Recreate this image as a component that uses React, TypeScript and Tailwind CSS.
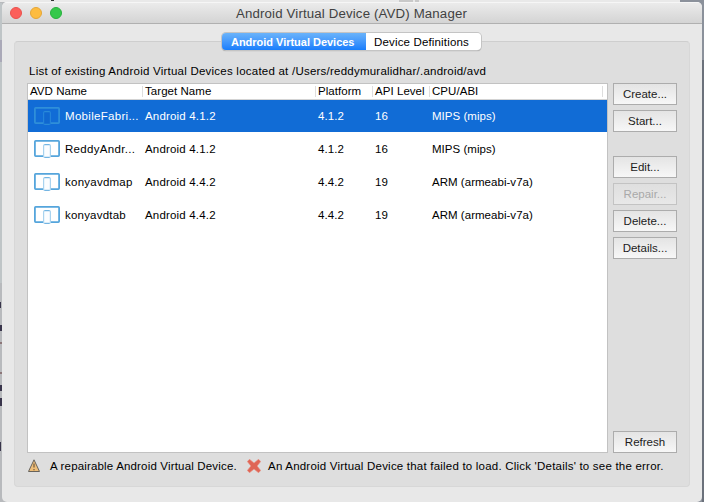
import type { ReactNode } from "react";

type Device = { name: string; nameTracking: string; target: string; platform: string; api: string; cpu: string };

const devices: Device[] = [
  { name: "MobileFabri...", nameTracking: "tracking-[0.3px]", target: "Android 4.1.2", platform: "4.1.2", api: "16", cpu: "MIPS (mips)" },
  { name: "ReddyAndr...", nameTracking: "tracking-[0.32px]", target: "Android 4.1.2", platform: "4.1.2", api: "16", cpu: "MIPS (mips)" },
  { name: "konyavdmap", nameTracking: "tracking-[0.24px]", target: "Android 4.4.2", platform: "4.4.2", api: "19", cpu: "ARM (armeabi-v7a)" },
  { name: "konyavdtab", nameTracking: "tracking-[0.2px]", target: "Android 4.4.2", platform: "4.4.2", api: "19", cpu: "ARM (armeabi-v7a)" },
];

const columns = "grid grid-cols-[115px_173px_57px_57px_173px_5px]";

function DeviceIcon({ selected }: { selected: boolean }) {
  const outer = selected ? "#2f8fd9" : "#55a5dc";
  const inner = selected ? "#2484da" : "#a9d3ef";
  const fill = selected ? "#1068d0" : "#fbfdff";
  return (
    <svg width="26" height="18" viewBox="0 0 26 18" className="block shrink-0">
      <rect x="0.9" y="0.9" width="24.2" height="15.2" rx="0.8" fill="none" stroke={outer} strokeWidth="1.8" />
      <rect x="9.6" y="4.6" width="6.8" height="12.8" rx="1.2" fill={fill} stroke={inner} strokeWidth="1.2" />
      <path d="M10.5 4.6h5M10.5 17.4h5" stroke={outer} strokeWidth="0.7" />
    </svg>
  );
}

function Button({ children, disabled = false }: { children: ReactNode; disabled?: boolean }) {
  return (
    <button
      disabled={disabled}
      className={
        "flex h-[22px] w-16 shrink-0 items-center justify-center border bg-linear-to-b text-[11.5px] " +
        (disabled
          ? "border-[#c3c3c3] from-[#dfdfdf] to-[#e8e8e8] text-[#a9a9a9]"
          : "border-[#acacac] from-[#e4e4e4] to-[#f7f7f7] text-[#1c1c1c]")
      }
    >
      {children}
    </button>
  );
}

function WarningIcon() {
  return (
    <svg width="12" height="14" viewBox="0 0 12 14" className="block">
      <path d="M6 0.8L11.5 12.5H0.5Z" fill="#edbd78" stroke="#67635c" strokeWidth="1" strokeLinejoin="round" />
      <path d="M6 4.5v4M6 10v1.3" stroke="#665037" strokeWidth="1.1" />
    </svg>
  );
}

function ErrorIcon() {
  return (
    <svg width="14" height="14" viewBox="0 0 14 14" className="block">
      <path d="M2.5 0.3L7 4.1L11.5 0.3L13.7 2.5L10.1 7L13.7 11.5L11.5 13.7L7 10L2.5 13.7L0.3 11.5L3.9 7L0.3 2.5Z" fill="#df6656" stroke="#eb8d80" strokeWidth="0.6" />
    </svg>
  );
}

function Backdrop() {
  return (
    <svg width="704" height="502" viewBox="0 0 704 502" className="absolute inset-0">
      <rect width="704" height="502" fill="#b8babd" />
      <rect width="681" height="2" fill="#e9e9e9" />
      <path d="M680 0h24v502h-24z" fill="#8b919b" />
      <path d="M702 60h2v442h-2z" fill="#6b717b" />
      <path d="M51 0h3v1h-3z" fill="#333" />
      <path d="M399 0h14v2h-14zM415 0h4v2h-4z" fill="#c9c9c9" />
      <path d="M0 3h2v280H0z" fill="#bfc5c7" />
      <path d="M0 40h2v22H0z" fill="#aaa9b8" />
      <path d="M0 302h1v6H0zM0 325h2v6H0zM0 385h2v6H0zM0 398h2v8H0zM0 442h1v9H0z" fill="#39354b" />
      <path d="M0 342h2v2H0zM0 372h2v2H0z" fill="#8d7678" />
    </svg>
  );
}

export default function App() {
  return (
    <div className="relative h-[502px] w-[704px] overflow-hidden font-['Liberation_Sans',Arial,sans-serif] text-[11.5px] leading-[16px] text-black">
      <Backdrop />
      <div className="relative ml-[2px] flex h-[502px] w-[700px] flex-col pt-[2px]">
        <div className="flex min-h-0 flex-1 flex-col overflow-hidden rounded-[5px] bg-[#e8e8e8]">
          <header className="flex h-[22px] shrink-0 items-center border-t border-b border-t-[#f6f6f6] border-b-[#b0b0b0] bg-linear-to-b from-[#ebebeb] to-[#d4d4d4] pl-2">
            <div className="flex w-[52px] shrink-0 gap-2">
              <i className="size-3 rounded-full border border-[#e9514c] bg-[#fc5f5a]" />
              <i className="size-3 rounded-full border border-[#e4a637] bg-[#fdbc40]" />
              <i className="size-3 rounded-full border border-[#26b03c] bg-[#34c84a]" />
            </div>
            <h1 className="ml-[174px] pt-px text-[13.25px] tracking-[0.15px] whitespace-nowrap text-[#414141]">Android Virtual Device (AVD) Manager</h1>
          </header>

          <nav className="relative z-10 mt-[9px] ml-[220px] flex h-[17px] w-[259px] shrink-0 overflow-hidden rounded-[4px] shadow-[0_0_0_1px_#c4c4c4,0_1px_1px_#888]">
            <div className="flex w-[144px] items-center bg-linear-to-b from-[#6ab3fa] to-[#167dfc] pl-[9px] text-[11px] tracking-[-0.02px] font-bold whitespace-nowrap text-white">Android Virtual Devices</div>
            <div className="flex w-[115px] items-center bg-white pl-2 tracking-[0.16px] whitespace-nowrap">Device Definitions</div>
          </nav>

          <main className="mt-[-9px] ml-3 flex h-[446px] w-[676px] shrink-0 flex-col rounded-[4px] border border-[#d7d7d7] border-t-[#cecece] bg-[#dedede] pl-3">
            <p className="mt-[21px] ml-[2px] h-5 shrink-0 tracking-[0.23px] whitespace-nowrap">List of existing Android Virtual Devices located at /Users/reddymuralidhar/.android/avd</p>
            <div className="flex h-[370px] shrink-0 gap-[5px]">
              <section className="flex w-[581px] flex-col border border-[#c2c2c2] bg-white">
                <div className={columns + " h-4 shrink-0 border-b border-[#d3d3d3] pl-[2px] leading-[15px] tracking-[0.05px]"}>
                  <span>AVD Name</span>
                  {["Target Name", "Platform", "API Level", "CPU/ABI"].map((label) => (
                    <span key={label} className="mt-[2px] -ml-[3px] h-[11px] border-l border-[#dedede] pl-[2px] leading-[11px] whitespace-nowrap">{label}</span>
                  ))}
                  <span className="mt-[2px] -ml-[3px] h-[11px] border-l border-[#dedede]" />
                </div>
                {devices.map((device, index) => (
                  <div key={device.name} className={columns + " mb-px h-8 shrink-0 items-center pl-[2px] " + (index === 0 ? "bg-[#116cd6] text-white" : "")}>
                    <span className={"flex items-center gap-[5px] pl-1 whitespace-nowrap " + device.nameTracking}><DeviceIcon selected={index === 0} />{device.name}</span>
                    <span className="tracking-[0.18px]">{device.target}</span>
                    <span className="tracking-[0.1px]">{device.platform}</span>
                    <span>{device.api}</span>
                    <span className="tracking-[0.03px] whitespace-nowrap">{device.cpu}</span>
                  </div>
                ))}
              </section>
              <aside className="flex flex-col gap-[5px]">
                <Button>Create...</Button>
                <Button>Start...</Button>
                <div className="h-[14px] shrink-0" />
                <Button>Edit...</Button>
                <Button disabled>Repair...</Button>
                <Button>Delete...</Button>
                <Button>Details...</Button>
                <div className="mt-auto"><Button>Refresh</Button></div>
              </aside>
            </div>
            <footer className="mt-[5px] flex h-4 items-center pl-px tracking-[0.21px] whitespace-nowrap">
              <WarningIcon />
              <span className="ml-[10px] w-[197px] shrink-0 tracking-[0.17px]">A repairable Android Virtual Device.</span>
              <ErrorIcon />
              <span className="ml-[7px]">An Android Virtual Device that failed to load. Click 'Details' to see the error.</span>
            </footer>
          </main>
        </div>
      </div>
    </div>
  );
}
